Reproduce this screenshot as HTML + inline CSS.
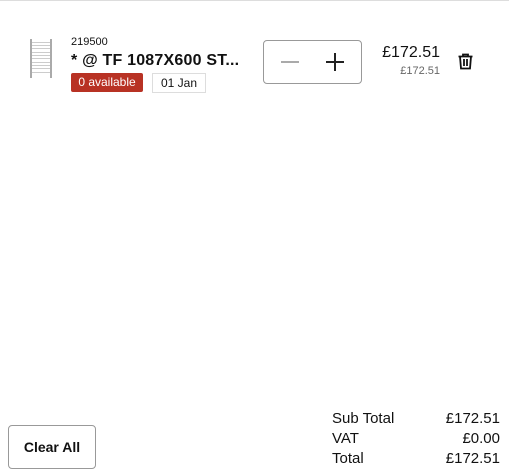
<!DOCTYPE html>
<html><head><style>
body{margin:0;width:509px;height:476px;background:#fff;font-family:"Liberation Sans",sans-serif;color:#111;position:relative;overflow:hidden;border-top:1px solid #ddd;box-sizing:border-box}
.a{position:absolute;white-space:nowrap}
</style></head><body>
<svg class="a" style="left:29px;top:37px" width="24" height="41" viewBox="0 0 24 41">
<rect x="1" y="1" width="2" height="39" fill="#aaa"/><rect x="21" y="1" width="2" height="39" fill="#aaa"/>
<g fill="#ccc"><rect x="3" y="4" width="18" height="1"/><rect x="3" y="7" width="18" height="1"/><rect x="3" y="10" width="18" height="1"/><rect x="3" y="14" width="18" height="1"/><rect x="3" y="17" width="18" height="1"/><rect x="3" y="20" width="18" height="1"/><rect x="3" y="24" width="18" height="1"/><rect x="3" y="27" width="18" height="1"/><rect x="3" y="30" width="18" height="1"/><rect x="3" y="34" width="18" height="1"/></g>
</svg>
<div class="a" style="left:71px;top:35px;font-size:11px">219500</div>
<div class="a" style="left:71px;top:51px;font-size:16px;font-weight:bold;letter-spacing:0.2px">* @ TF 1087X600 ST...</div>
<div class="a" style="left:71px;top:72px;width:72px;height:19px;background:#b83224;color:#fff;font-size:12px;line-height:19px;text-align:center;border-radius:2px">0 available</div>
<div class="a" style="left:152px;top:72px;width:52px;height:18px;border:1px solid #ddd;font-size:12px;line-height:18px;text-align:center">01 Jan</div>
<div class="a" style="left:263px;top:39px;width:97px;height:42px;border:1px solid #999;border-radius:4px"></div>
<div class="a" style="left:281px;top:60px;width:18px;height:1.5px;background:#aaa"></div>
<div class="a" style="left:326px;top:60px;width:18px;height:1.5px;background:#222"></div>
<div class="a" style="left:334.3px;top:52px;width:1.5px;height:18px;background:#222"></div>
<div class="a" style="right:69px;top:43px;font-size:16px">£172.51</div>
<div class="a" style="right:69px;top:64px;font-size:11px;color:#666">£172.51</div>
<svg class="a" style="left:457px;top:52px" width="17" height="17" viewBox="0 0 17 17" fill="none" stroke="#111" stroke-width="1.8">
<path d="M1.5 3.5h14M6 3.5V1.5h5v2M3 3.5l1 12h9l1-12M7 6v7M10 6v7"/></svg>
<div class="a" style="left:8px;top:424px;width:86px;height:42px;border:1px solid #999;border-radius:4px;font-size:14px;font-weight:bold;text-align:center;line-height:42px">Clear All</div>
<div class="a" style="left:332px;top:408px;font-size:15px;line-height:20px">Sub Total<br>VAT<br>Total</div>
<div class="a" style="right:9px;top:408px;font-size:15px;line-height:20px;text-align:right">£172.51<br>£0.00<br>£172.51</div>
</body></html>
